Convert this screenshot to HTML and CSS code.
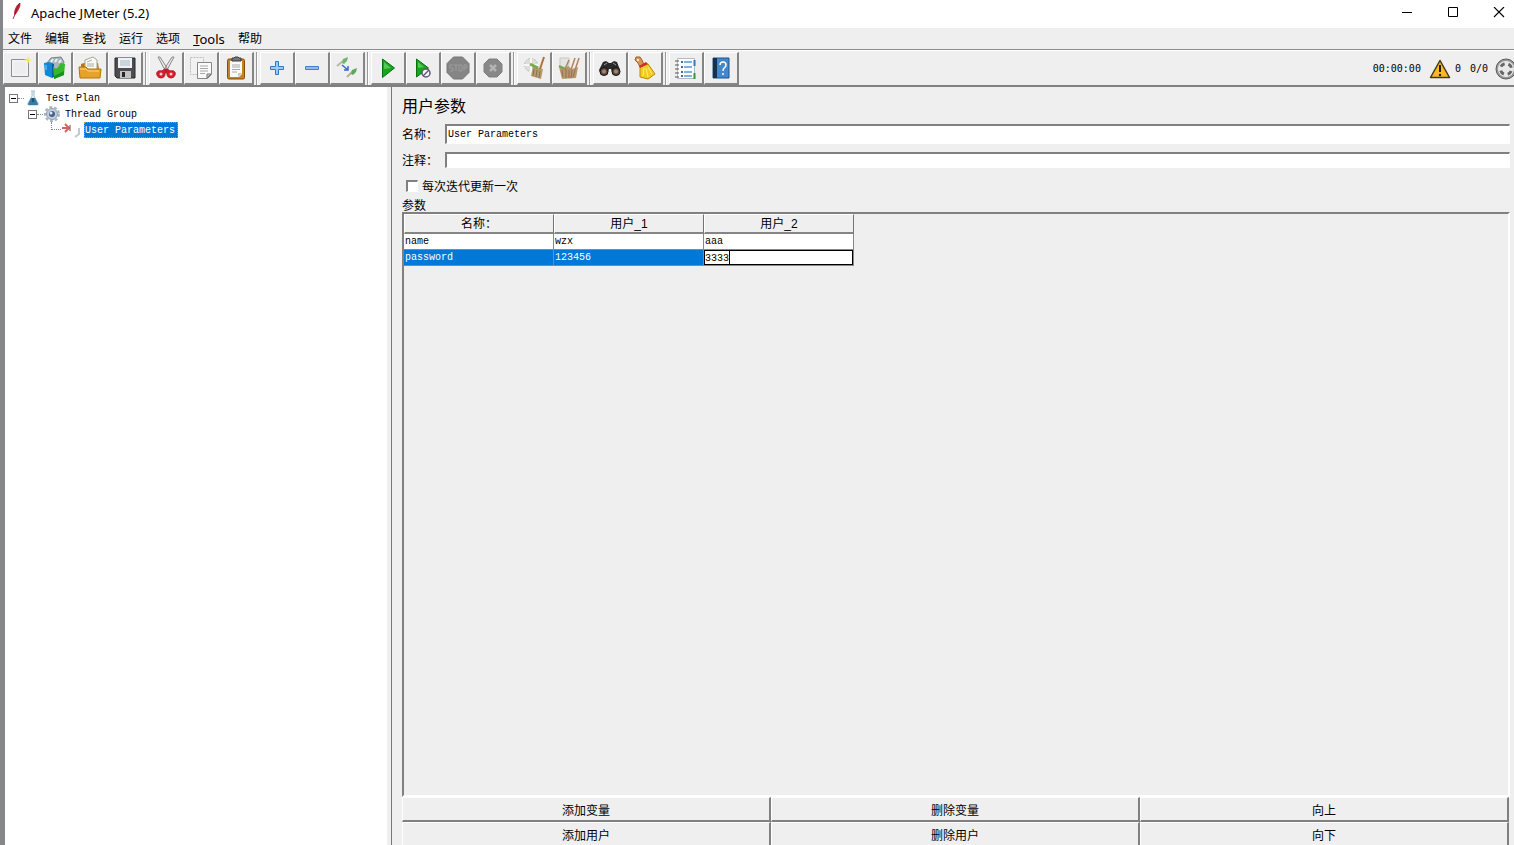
FILE: index.html
```html
<!DOCTYPE html>
<html lang="zh-CN">
<head>
<meta charset="utf-8">
<title>Apache JMeter (5.2)</title>
<link rel="stylesheet" href="styles.css">
</head>
<body>
<div class="window">
  <header class="titlebar">
    <svg class="feather" width="12" height="18" viewBox="0 0 12 18"><path d="M2 17L5 10" stroke="#8b3c58" stroke-width="1"/><path d="M3 12C3 7 6 2 9 1c1 2 0 4-1 6s-2 4-4 6z" fill="#cf2630"/><path d="M4 12C5 8 7 4 9 1" stroke="#7c2048" stroke-width="1" fill="none"/></svg>
    <h1 class="caption">Apache JMeter (5.2)</h1>
    <div class="window-controls">
      <button class="win-btn" aria-label="Minimize"><svg width="12" height="12" viewBox="0 0 12 12"><path d="M1 5.500h10" stroke="#000"/></svg></button>
      <button class="win-btn" aria-label="Maximize"><svg width="12" height="12" viewBox="0 0 12 12"><path d="M1.500 0.500h9v9h-9z" stroke="#000" fill="none"/></svg></button>
      <button class="win-btn" aria-label="Close"><svg width="12" height="12" viewBox="0 0 12 12"><path d="M1 0l10 10M11 0L1 10" stroke="#000" stroke-width="1.100"/></svg></button>
    </div>
  </header>

  <nav class="menubar">
    <button class="menu">文件</button><button class="menu">编辑</button><button class="menu">查找</button><button class="menu">运行</button><button class="menu">选项</button><button class="menu menu-latin"><u>T</u>ools</button><button class="menu">帮助</button>
  </nav>

  <div class="toolbar">
    <div class="group">
      <button class="tool" aria-label="New"><svg viewBox="0 0 24 24"><path d="M3.500 3.500h17v17h-17z" fill="#f3f2f3" stroke="#8e8e94"/><path d="M6 6h12v12H6z" fill="#ededf0"/><path d="M20 0l1 3 3 1-3 1-1 3-1-3-4-1 4-1z" fill="#f7e75e"/></svg></button>
      <button class="tool" aria-label="Templates"><svg viewBox="0 0 24 24"><path d="M4 7l4-5 10-1 3 5-2 8H5z" fill="#a9b7bd" stroke="#6f8288"/><path d="M8 6l2-3M12 6l2-3M16 7l2-3" stroke="#e8f0f2" stroke-width="2"/><path d="M1 7l5-1 3 2v14l-7-3z" fill="#1187d8"/><path d="M6 6l3 2v14l2-1V8z" fill="#0a5ca5"/><path d="M10 10q3 5 6 0l1-3 5 1-1 11-10 4z" fill="#36b72e"/><path d="M11 20l10-5v4l-10 4z" fill="#159323"/><path d="M3 9v5" stroke="#7cd2ff"/></svg></button>
      <button class="tool" aria-label="Open"><svg viewBox="0 0 24 24"><path d="M3 12V8l3-1h14l1 6z" fill="#bd790c"/><path d="M7 13V4l8-3 4 3v10z" fill="#fbfbf6" stroke="#a2a096"/><path d="M9 6l5-2M9 8h7M9 10h7" stroke="#a5abb0"/><path d="M1 11h7l2 2h13l-1 9H2z" fill="#e5a32b" stroke="#b87508"/><path d="M2 13h6l2 2h11" stroke="#ffd475" fill="none"/></svg></button>
      <button class="tool" aria-label="Save"><svg viewBox="0 0 24 24"><path d="M2 2h20v20H4l-2-2z" fill="#4c4c51" stroke="#28282c"/><path d="M5 2h14v10H5z" fill="#eff2f5"/><path d="M7 5h10M7 7h10M7 9h10" stroke="#a9b7c1"/><path d="M7 15h11v7H7z" fill="#c2c2c3"/><path d="M9 16h3v5H9z" fill="#25252a"/></svg></button>
    </div>
    <div class="group">
      <button class="tool" aria-label="Cut"><svg viewBox="0 0 24 24"><path d="M4 1l2 0 9 14-3 1zM20 1l-2 0-9 14 3 1z" fill="#e8e8e8" stroke="#8b8b8e"/><path d="M11 13l-3 2c-4-1-6 1-5 4 1 4 8 4 8-1l1-4 1 4c0 5 7 5 8 1 1-3-1-5-5-4l-3-2z" fill="#d91c2a" stroke="#b11722"/><circle cx="7" cy="18" r="1.500" fill="#f3d2d2"/><circle cx="17" cy="18" r="1.500" fill="#f3d2d2"/></svg></button>
      <button class="tool" aria-label="Copy"><svg viewBox="0 0 24 24"><path d="M1.500 1.500h13v17h-13z" fill="#f2f2f2" stroke="#bbb" stroke-dasharray="2 1"/><path d="M8.500 6.500h14v12l-4 4h-10z" fill="#fafafa" stroke="#87878b"/><path d="M11 10h8M11 12.500h8M11 15h8M11 17.500h5" stroke="#a8a8aa"/><path d="M22 18h-4v4z" fill="#d1d1d1" stroke="#77777a"/></svg></button>
      <button class="tool" aria-label="Paste"><svg viewBox="0 0 24 24"><rect x="3.500" y="3" width="17" height="20" rx="1.500" fill="#c48423" stroke="#855005"/><path d="M6 5h12v13l-3 3H6z" fill="#fbfbfb"/><path d="M8 5V2h2l1-1h3l1 1h2v3z" fill="#777" stroke="#3d3d3d"/><path d="M8 9h8M8 11h8M8 13.500h8M8 16h5" stroke="#a8a8aa"/><path d="M18 17h-4v4z" fill="#d0c8be"/></svg></button>
    </div>
    <div class="group">
      <button class="tool" aria-label="Expand All"><svg viewBox="0 0 24 24"><path d="M10.500 5.500h3v5h5v3h-5v5h-3v-5h-5v-3h5z" fill="#9acbf4" stroke="#3478bc"/></svg></button>
      <button class="tool" aria-label="Collapse All"><svg viewBox="0 0 24 24"><path d="M5.500 10.500h13v3h-13z" fill="#8fbaf0" stroke="#4781ce"/></svg></button>
      <button class="tool" aria-label="Toggle"><svg viewBox="0 0 24 24"><path d="M2 10l6-5" stroke="#b6b9a7" stroke-width="2"/><path d="M7 7l1-4 5-2-1 4-3 3z" fill="#71b568"/><path d="M12 21l6-6" stroke="#b4ae9d" stroke-width="2"/><path d="M16 18l1-4 5-2-1 4-3 3z" fill="#5da95b"/><path d="M7 9l6 5M13 10v4H9" stroke="#3567d3" stroke-width="1.500" fill="none"/></svg></button>
    </div>
    <div class="group">
      <button class="tool" aria-label="Start"><svg viewBox="0 0 24 24"><path d="M6.500 3l12 9-12 9.500z" fill="#16a51d" stroke="#08720e"/><path d="M8 6l7 6-7 1z" fill="#54c956"/></svg></button>
      <button class="tool" aria-label="Start no pauses"><svg viewBox="0 0 24 24"><path d="M5.500 3l12 9-12 9z" fill="#16a51d" stroke="#08720e"/><path d="M7 6l6 5-6 1z" fill="#54c956"/><circle cx="15" cy="17" r="4" fill="#f5f5fa" stroke="#625878" stroke-width="1.500"/><path d="M12 20l6-6" stroke="#625878" stroke-width="1.500"/></svg></button>
      <button class="tool" aria-label="Stop" disabled><svg viewBox="0 0 24 24"><path d="M7.500 1h9L23 7.500v9L16.500 23h-9L1 16.500v-9z" fill="#858585" stroke="#777"/><path d="M7 9H4v3h3v3H4M8 9h4M10 9v6M13 9h3v6h-3zM18 15V9h3v3h-3" stroke="#9c9c9c" fill="none"/></svg></button>
      <button class="tool" aria-label="Shutdown" disabled><svg viewBox="0 0 24 24"><path d="M8 3h8l5 5v8l-5 5H8l-5-5V8z" fill="#888" stroke="#808080"/><path d="M9 9l6 6M15 9l-6 6" stroke="#b4b4b4" stroke-width="2.500"/></svg></button>
    </div>
    <div class="group">
      <button class="tool" aria-label="Clear"><svg viewBox="0 0 24 24"><circle cx="9" cy="9" r="6.500" fill="#deded8" stroke="#bbb" stroke-dasharray="2 1"/><path d="M9 2v14M2 9h14" stroke="#f7f7f7" stroke-width="2"/><path d="M11 10l5 2 5 1-2 10-10-3z" fill="#b69b6c"/><path d="M8 8l8 4" stroke="#78aa50" stroke-width="3"/><path d="M22 1l-4 12" stroke="#b46e37" stroke-width="2"/><path d="M12 13l-1 7M15 14l-1 7M18 15l-1 7" stroke="#8a7353"/></svg></button>
      <button class="tool" aria-label="Clear All"><svg viewBox="0 0 24 24"><path d="M3 2h9v9H3z" fill="#e3e5e1" stroke="#c6c8c2"/><path d="M2 11l5 2 4-3 4 3 6-2-2 11-14 1z" fill="#b9966c"/><path d="M12 4l-4 9M18 2l-4 12M22 2l-4 12" stroke="#b1845a" stroke-width="1.500"/><path d="M5 14l1 7M9 13v9M12 14v8M15 14l-1 8M18 14l-2 7" stroke="#8e7359"/><path d="M2 10l6 3" stroke="#73a357" stroke-width="2"/></svg></button>
    </div>
    <div class="group">
      <button class="tool" aria-label="Search"><svg viewBox="0 0 24 24"><path d="M8 5l3 2h2l3-2 3 1 3 8-2 5h-5l-2-6h-2l-2 6H3l-2-5 4-8z" fill="#292a2c"/><circle cx="6" cy="15.500" r="4" fill="#594b42" stroke="#111"/><circle cx="18" cy="15.500" r="4" fill="#594b42" stroke="#111"/><circle cx="6" cy="15.500" r="2" fill="#aa836a"/><circle cx="18" cy="15.500" r="2" fill="#aa836a"/><path d="M6 9l3-2M15 7l3 2" stroke="#95999c"/></svg></button>
      <button class="tool" aria-label="Clear search"><svg viewBox="0 0 24 24"><path d="M3 1h4l2 3 2 5-4 2-2-4-3-3z" fill="#dc9651" stroke="#a15b29"/><circle cx="5" cy="4" r="1" fill="#fff"/><path d="M7 11l8-3 7 10-7 5-8-2z" fill="#f2cc20" stroke="#bb8b08"/><path d="M11 12l-1 8M13 12l2 9M15 11l4 7" stroke="#fff071"/><path d="M6 10l7-4 2 2-8 4z" fill="#cd3024"/></svg></button>
    </div>
    <div class="group">
      <button class="tool" aria-label="Function Helper"><svg viewBox="0 0 24 24"><path d="M3.500 2.500h17v20h-17z" fill="#fbfcff" stroke="#b5bac2"/><path d="M1 5h4M1 9h4M1 13h4M1 17h4M1 21h4" stroke="#555"/><path d="M7 6h2M7 11h2M7 16h2M7 20h2" stroke="#1b377a" stroke-width="1.500"/><path d="M10 6h8M10 11h8M10 16h8M10 20h8" stroke="#579bd4" stroke-width="1.500"/><path d="M20.500 4v6" stroke="#3577c2" stroke-width="2"/><path d="M20.500 17v6" stroke="#329343" stroke-width="2"/></svg></button>
      <button class="tool" aria-label="Help"><svg viewBox="0 0 24 24"><path d="M4 2h16v20H4z" fill="#4387cc" stroke="#21538b"/><path d="M4 2h4v20H4z" fill="#18304f"/><path d="M11 9c0-4 6-4 6 0 0 3-3 2-3 6" stroke="#fff" stroke-width="1.500" fill="none"/><circle cx="14" cy="18" r="1" fill="#fff"/></svg></button>
    </div>
    <div class="status">
      <span class="timer">00:00:00</span>
      <svg class="warn" width="22" height="20" viewBox="0 0 22 20"><path d="M11 1.500L20.500 18.500H1.500z" fill="#f7b924" stroke="#453811" stroke-width="1.500" stroke-linejoin="round"/><path d="M11 6v7" stroke="#281e04" stroke-width="2"/><circle cx="11" cy="16" r="1.200" fill="#281e04"/></svg>
      <span>0</span>
      <span class="threads">0/0</span>
      <svg class="gauge" width="22" height="24" viewBox="0 0 22 24"><circle cx="11" cy="12" r="10" fill="#9a9a9a" stroke="#5a5a5a"/><circle cx="11" cy="12" r="8" fill="#e9e9e9"/><circle cx="11" cy="12" r="5.500" stroke="#666" stroke-width="3" stroke-dasharray="4.600 4" stroke-dashoffset="-2"/></svg>
    </div>
  </div>

  <div class="workspace">
    <aside class="tree-pane">
      <ul class="tree">
        <li class="node"><span class="expander"></span><span class="stem"></span>
          <svg class="node-icon" width="18" height="16" viewBox="0 0 18 16"><path d="M7 1h4M8 1v5L4 13q-1 2 1 2h8q2 0 1-2L10 6V1" fill="#e4eff5" stroke="#a9bfcc"/><path d="M7 8h4l3 6q0 1-1 1H5q-1 0-1-1z" fill="#347ba5"/><path d="M8 8l2 0v4H8z" fill="#18557c"/></svg>
          <span class="label">Test Plan</span></li>
        <li class="node level-1"><span class="expander"></span><span class="stem"></span>
          <svg class="node-icon" width="18" height="16" viewBox="0 0 18 16"><circle cx="9" cy="8" r="7" fill="none" stroke="#a9b3c1" stroke-width="2" stroke-dasharray="3 2"/><circle cx="9" cy="8" r="5.500" fill="#c6ced9" stroke="#8e9aab"/><circle cx="9" cy="8" r="3" fill="#3f638e"/><circle cx="8" cy="7" r="1.500" fill="#dce9f3"/></svg>
          <span class="label">Thread Group</span></li>
        <li class="node level-2"><span class="elbow"></span>
          <svg class="node-icon" width="22" height="16" viewBox="0 0 22 16"><path d="M1 6h6M4 2l4 4-4 4" stroke="#d5625b" stroke-width="2" fill="none"/><path d="M9 3v6" stroke="#774241"/><path d="M18 6v6l-4 3" stroke="#c5c8cd" stroke-width="2" fill="none"/></svg>
          <span class="label selected">User Parameters</span></li>
      </ul>
    </aside>
    <main class="editor">
      <h2 class="heading">用户参数</h2>
      <div class="field"><label for="name">名称：</label><input id="name" type="text" value="User Parameters"></div>
      <div class="field comment"><label for="comment">注释：</label><input id="comment" type="text"></div>
      <div class="check"><input id="iter" type="checkbox"><label for="iter">每次迭代更新一次</label></div>
      <div class="section-title">参数</div>
      <div class="table-frame">
        <table class="params">
          <thead><tr><th>名称：</th><th>用户_1</th><th>用户_2</th></tr></thead>
          <tbody>
            <tr><td>name</td><td>wzx</td><td>aaa</td></tr>
            <tr class="active"><td>password</td><td>123456</td><td class="editing"><input type="text" value="3333" aria-label="用户_2"><span class="caret"></span></td></tr>
          </tbody>
        </table>
      </div>
      <div class="actions">
        <button>添加变量</button><button>删除变量</button><button>向上</button>
        <button>添加用户</button><button>删除用户</button><button>向下</button>
      </div>
    </main>
  </div>
</div>
</body>
</html>
```
FILE: styles.css
```css
* { box-sizing: border-box; }

body {
  margin: 0;
  overflow: hidden;
  background: #efefef;
  color: #000;
  font: 12px/16px "Liberation Sans", "Noto Sans CJK SC", sans-serif;
}

button, input { font: inherit; color: inherit; margin: 0; padding: 0; border-radius: 0; }
button { background: none; border: 0; }
svg { display: block; flex: none; fill: none; }

.window {
  display: flex;
  flex-direction: column;
  height: 100vh;
  border-left: 3px solid #858789;
}

.titlebar { display: flex; align-items: flex-start; height: 28px; flex: none; background: #fff; }
.feather { margin: 2px 8px 0 8px; }
.caption { margin: 4px 0 0; font: 13px/18px "Noto Sans", sans-serif; }
.window-controls { display: flex; margin-left: auto; }
.win-btn { display: flex; justify-content: center; align-items: center; width: 46px; height: 26px; }
.win-btn:last-child { width: 45px; padding-left: 14px; }
.win-btn:nth-child(2) { padding-left: 13px; }
.win-btn:first-child { padding-left: 14px; }

.menubar { display: flex; gap: 13px; height: 22px; flex: none; padding-left: 5px; border-bottom: 1px solid #8b8b8b; }
.menu { width: 24px; white-space: nowrap; }
.menu-latin { width: 32px; font-family: "Noto Sans", sans-serif; font-size: 13px; }

.toolbar {
  display: flex;
  gap: 6px;
  height: 37px;
  flex: none;
  padding-top: 1px;
  border-top: 1px solid #fff;
  border-bottom: 2px solid #808080;
}
.group { display: flex; height: 33px; position: relative; }
.group + .group::before {
  content: "";
  position: absolute;
  left: -4px;
  top: 0;
  bottom: 0;
  border-left: 1px solid #999;
  border-right: 1px solid #fff;
}
.tool {
  display: flex;
  justify-content: center;
  align-items: center;
  width: 35px;
  border: solid;
  border-width: 1px 2px 2px 1px;
  border-color: #fff #858585 #858585 #fff;
}
.tool svg { width: 24px; height: 24px; }
.status { display: flex; align-items: center; margin-left: auto; font: 10px/16px "DejaVu Sans Mono", monospace; }
.warn { margin: 0 4px 0 8px; }
.threads { margin: 0 7px 0 9px; }
.gauge { margin-right: -3px; }

.workspace { display: flex; flex: 1; min-height: 0; }
.tree-pane { width: 384px; flex: none; background: #fff; border-left: 2px solid #858789; border-right: 1px solid #fff; }
.tree { list-style: none; margin: 0; padding: 3px 0 0 4px; font: 10px/16px "Liberation Mono", monospace; }
.node { display: flex; align-items: center; height: 16px; }
.level-1 { padding-left: 19px; }
.level-2 { padding-left: 42px; }
.expander {
  width: 9px;
  height: 9px;
  border: 1px solid #777;
  background: linear-gradient(#000, #000) center / 5px 1px no-repeat;
}
.stem { width: 6px; border-top: 1px dotted #888; }
.node-icon { margin-right: 2px; }
.elbow { width: 10px; height: 8px; align-self: flex-start; border-left: 1px dotted #888; border-bottom: 1px dotted #888; }
.label { height: 16px; padding: 1px 2px 0; line-height: 15px; }
.level-2 .node-icon { margin-right: 1px; }
.selected { background: #0078d7; color: #fff; outline: 1px dotted #e08a30; outline-offset: -1px; padding: 1px 3px 0 1px; }

.editor {
  flex: 1;
  min-width: 0;
  display: flex;
  flex-direction: column;
  margin-left: 4px;
  padding: 10px 4px 0 10px;
  border-left: 1px solid #777;
}
.heading { margin: 0 0 7px; font-size: 16px; line-height: 20px; font-weight: 400; }
.field { display: flex; align-items: center; height: 20px; margin-bottom: 8px; }
.field label { width: 43px; flex: none; padding-top: 1px; }
.field input {
  flex: 1;
  min-width: 0;
  height: 20px;
  padding: 0 1px;
  border: solid;
  border-width: 2px 1px 1px 2px;
  border-color: #808080 #fff #fff #808080;
  outline: 0;
  background: #fff;
  font: 10px/16px "Liberation Mono", monospace;
}
.comment { height: 16px; margin-bottom: 9px; }
.comment input { height: 16px; }
.check { display: flex; align-items: center; gap: 4px; height: 18px; padding-left: 4px; margin-bottom: 2px; }
.check label { padding-top: 1px; }
.check input {
  appearance: none;
  width: 12px;
  height: 12px;
  border: solid;
  border-width: 2px 1px 1px 2px;
  border-color: #808080 #fff #fff #808080;
  background: #fff;
}
.section-title { height: 15px; line-height: 18px; }
.table-frame {
  flex: 1;
  min-height: 0;
  border: solid;
  border-width: 2px;
  border-color: #808080 #fff #fff #808080;
}
.params { width: 450px; table-layout: fixed; border-collapse: separate; border-spacing: 0; }
.params th {
  height: 20px;
  padding: 1px 0 0;
  font-weight: 400;
  line-height: 16px;
  border: solid;
  border-width: 1px 1px 2px 1px;
  border-color: #fff #747474 #858585 #fff;
}
.params td {
  height: 16px;
  padding: 1px 1px 0;
  background: #fff;
  border-right: 1px solid #888;
  border-bottom: 1px solid #888;
  font: 10px/14px "Liberation Mono", monospace;
}
.params .active td { background: #0078d7; color: #fff; }
.params .active .editing { position: relative; padding: 0; background: #fff; color: #000; }
.editing input { display: block; width: 100%; height: 15px; padding: 1px 0 0; border: 1px solid #000; outline: 0; background: #fff; }
.caret { position: absolute; left: 25px; top: 1px; bottom: 1px; border-left: 1px solid #000; }

.actions { display: grid; grid-template-columns: repeat(3, 1fr); grid-auto-rows: 25px; height: 48px; flex: none; padding-right: 1px; }
.actions button {
  padding-top: 3px;
  border: solid;
  border-width: 1px 2px 2px 1px;
  border-color: #fff #808080 #808080 #fff;
}
```
